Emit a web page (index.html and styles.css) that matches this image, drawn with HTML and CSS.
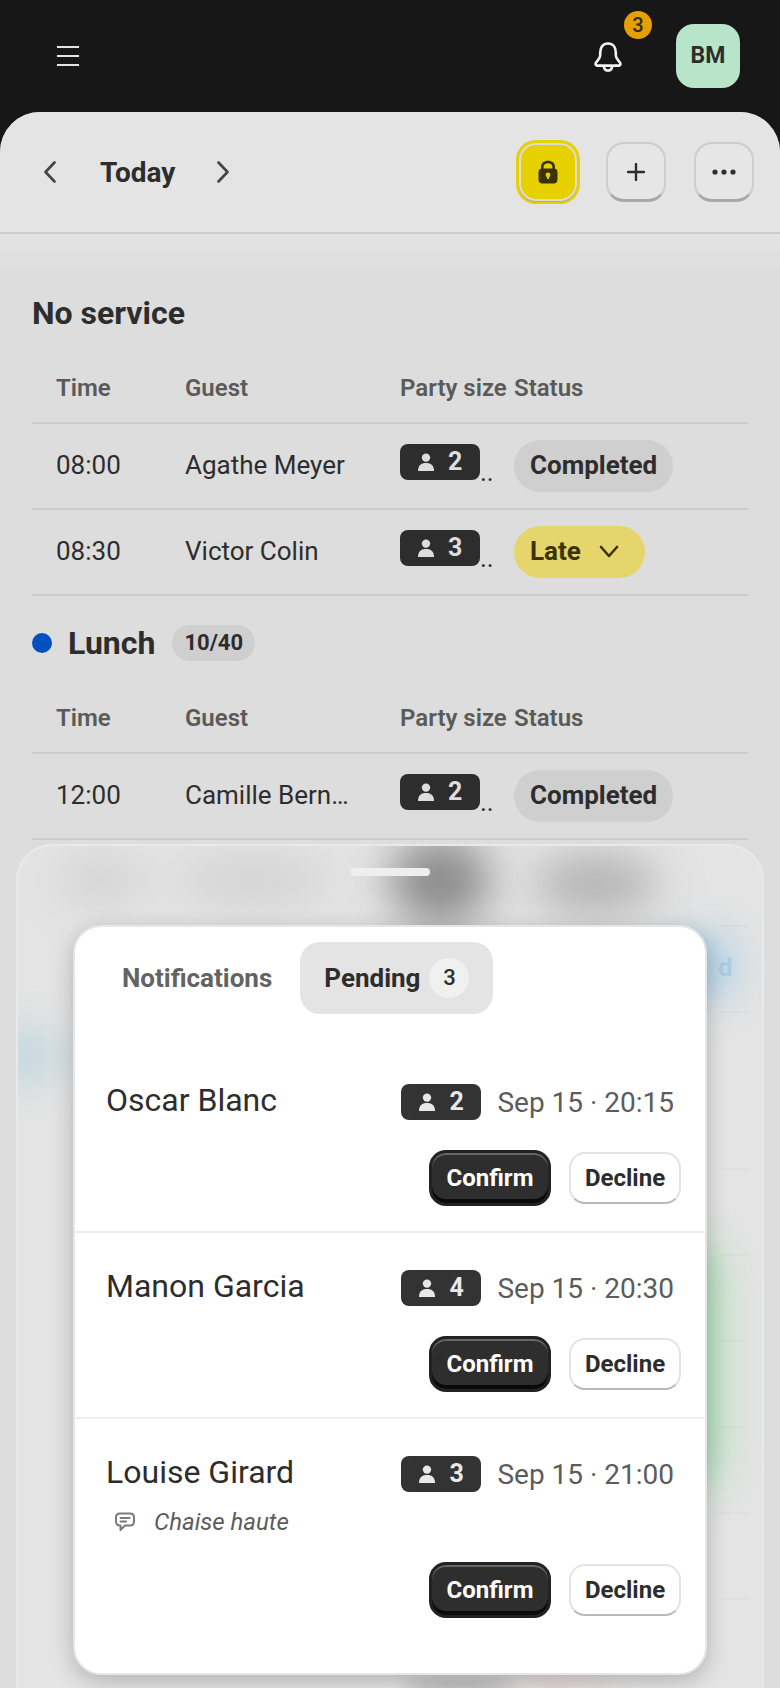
FILE: index.html
```html
<!DOCTYPE html>
<html lang="en">

<head>
	<meta charset="UTF-8">
	<meta name="viewport" content="width=device-width, initial-scale=1.0">
	<title>Today</title>
	<link rel="stylesheet" href="styles.css">
</head>

<body>
	<svg class="icon-defs" width="0" height="0">
		<symbol id="person" viewBox="0 0 16 18">
			<circle cx="8" cy="4.6" r="4.2" />
			<path d="M0 18 C0 12.5 3 10 8 10 C13 10 16 12.5 16 18 Z" />
		</symbol>
	</svg>

	<div class="topbar">
		<button class="menu-btn" aria-label="Menu">
			<span></span><span></span><span></span>
		</button>
		<div class="topbar-right">
			<div class="bell">
				<svg width="28" height="30" viewBox="0 0 28 30" fill="none" stroke="#f2f2f2" stroke-width="2.6" stroke-linejoin="round">
					<path d="M14 1.5 C8.8 1.5 6.2 5.6 6.2 10.5 V13.5 C6.2 16.8 3 18.6 1.8 21 C1.1 22.6 2 23.6 3.8 23.6 H24.2 C26 23.6 26.9 22.6 26.2 21 C25 18.6 21.8 16.8 21.8 13.5 V10.5 C21.8 5.6 19.2 1.5 14 1.5 Z" />
					<path d="M9.8 23.6 C9.8 27 11.6 28.6 14 28.6 C16.4 28.6 18.2 27 18.2 23.6" />
				</svg>
				<span class="bell-badge">3</span>
			</div>
			<div class="avatar">BM</div>
		</div>
	</div>

	<div class="sheet">
		<div class="sheet-header">
			<div class="date-nav">
				<svg width="14" height="22" viewBox="0 0 14 22" fill="none" stroke="#444" stroke-width="2.6" stroke-linecap="round" stroke-linejoin="round"><path d="M11.5 1.5 L2.5 11 L11.5 20.5" /></svg>
				<span class="date-label">Today</span>
				<svg width="14" height="22" viewBox="0 0 14 22" fill="none" stroke="#444" stroke-width="2.6" stroke-linecap="round" stroke-linejoin="round"><path d="M2.5 1.5 L11.5 11 L2.5 20.5" /></svg>
			</div>
			<div class="sheet-actions">
				<button class="btn-lock" aria-label="Lock">
					<svg width="20" height="24" viewBox="0 0 20 24"><path d="M3 9 V7 C3 3 6 .8 10 .8 C14 .8 17 3 17 7 V9 H14.4 V7 C14.4 4.6 12.6 3.2 10 3.2 C7.4 3.2 5.6 4.6 5.6 7 V9 Z" fill="#3a3300" /><rect x="0.5" y="8.5" width="19" height="15" rx="4" fill="#3a3300" /><circle cx="10" cy="15" r="2.4" fill="#e6d000" /><rect x="9" y="15" width="2" height="4" fill="#e6d000" /></svg>
				</button>
				<button class="btn-square" aria-label="Add">
					<svg width="18" height="18" viewBox="0 0 18 18" stroke="#2d2d2d" stroke-width="2.4" stroke-linecap="round"><path d="M9 1 V17 M1 9 H17" /></svg>
				</button>
				<button class="btn-square" aria-label="More">
					<svg width="24" height="6" viewBox="0 0 24 6" fill="#2d2d2d"><circle cx="3" cy="3" r="2.6" /><circle cx="12" cy="3" r="2.6" /><circle cx="21" cy="3" r="2.6" /></svg>
				</button>
			</div>
		</div>

		<div class="services">
			<section class="service">
				<h2 class="service-title">No service</h2>
				<table class="res-table">
					<thead>
						<tr>
							<th class="col-time">Time</th>
							<th class="col-guest">Guest</th>
							<th class="col-party">Party size</th>
							<th class="col-status">Status</th>
						</tr>
					</thead>
					<tbody>
						<tr>
							<td class="col-time">08:00</td>
							<td class="col-guest"><div class="guest-name">Agathe Meyer</div></td>
							<td class="col-party">
								<div class="party-cell"><span class="party-pill"><svg width="16" height="18"><use href="#person" /></svg>2</span><span class="party-more">..</span></div>
							</td>
							<td class="col-status"><span class="status status-done">Completed</span></td>
						</tr>
						<tr>
							<td class="col-time">08:30</td>
							<td class="col-guest"><div class="guest-name">Victor Colin</div></td>
							<td class="col-party">
								<div class="party-cell"><span class="party-pill"><svg width="16" height="18"><use href="#person" /></svg>3</span><span class="party-more">..</span></div>
							</td>
							<td class="col-status">
								<span class="status status-late">Late
									<svg width="20" height="13" viewBox="0 0 20 13" fill="none" stroke="#3a3300" stroke-width="2.6" stroke-linecap="round" stroke-linejoin="round"><path d="M2 2 L10 11 L18 2" /></svg>
								</span>
							</td>
						</tr>
					</tbody>
				</table>
			</section>

			<section class="service service-lunch">
				<h2 class="service-title"><span class="service-dot"></span>Lunch<span class="service-count">10/40</span></h2>
				<table class="res-table">
					<thead>
						<tr>
							<th class="col-time">Time</th>
							<th class="col-guest">Guest</th>
							<th class="col-party">Party size</th>
							<th class="col-status">Status</th>
						</tr>
					</thead>
					<tbody>
						<tr>
							<td class="col-time">12:00</td>
							<td class="col-guest"><div class="guest-name">Camille Bernard</div></td>
							<td class="col-party">
								<div class="party-cell"><span class="party-pill"><svg width="16" height="18"><use href="#person" /></svg>2</span><span class="party-more">..</span></div>
							</td>
							<td class="col-status"><span class="status status-done">Completed</span></td>
						</tr>
					</tbody>
				</table>
			</section>
		</div>
	</div>

	<div class="drawer">
		<!-- what shows through the frosted drawer -->
		<div class="glow glow-dark"></div>
		<div class="glow glow-grey"></div>
		<div class="glow glow-time"></div>
		<div class="glow glow-guest"></div>
		<div class="glow glow-blue"></div>
		<div class="glow glow-blue-left"></div>
		<div class="glow glow-green"></div>
		<div class="glow glow-red"></div>
		<div class="glow glow-under"></div>
		<span class="ghost-d">d</span>
		<div class="ghost-lines">
			<i></i><i></i><i class="gap"></i><i></i><i></i><i></i><i></i><i></i>
		</div>

		<div class="drawer-handle"></div>

		<div class="panel">
			<div class="tabs">
				<div class="tab">Notifications</div>
				<div class="tab tab-active">Pending <span class="tab-count">3</span></div>
			</div>

			<div class="pending-list">
				<div class="pending-item">
					<div class="pending-top">
						<span class="pending-name">Oscar Blanc</span>
						<span class="party-pill"><svg width="16" height="18"><use href="#person" /></svg>2</span>
						<span class="pending-date">Sep 15 · 20:15</span>
					</div>
					<div class="pending-actions">
						<button class="btn-confirm">Confirm</button>
						<button class="btn-decline">Decline</button>
					</div>
				</div>
				<div class="pending-item">
					<div class="pending-top">
						<span class="pending-name">Manon Garcia</span>
						<span class="party-pill"><svg width="16" height="18"><use href="#person" /></svg>4</span>
						<span class="pending-date">Sep 15 · 20:30</span>
					</div>
					<div class="pending-actions">
						<button class="btn-confirm">Confirm</button>
						<button class="btn-decline">Decline</button>
					</div>
				</div>
				<div class="pending-item">
					<div class="pending-top">
						<span class="pending-name">Louise Girard</span>
						<span class="party-pill"><svg width="16" height="18"><use href="#person" /></svg>3</span>
						<span class="pending-date">Sep 15 · 21:00</span>
					</div>
					<div class="pending-note">
						<svg width="22" height="20" viewBox="0 0 22 20" fill="none" stroke="#7a7a7a" stroke-width="2" stroke-linecap="round" stroke-linejoin="round"><path d="M6 1.5 H16 C18.6 1.5 20 3 20 5.5 V9.5 C20 12 18.6 13.5 16 13.5 H11 L6.5 18 V13.5 H6 C3.4 13.5 2 12 2 9.5 V5.5 C2 3 3.4 1.5 6 1.5 Z" /><path d="M6.5 6 H15.5 M6.5 9.5 H12" /></svg>
						<span>Chaise haute</span>
					</div>
					<div class="pending-actions">
						<button class="btn-confirm">Confirm</button>
						<button class="btn-decline">Decline</button>
					</div>
				</div>
			</div>
		</div>
	</div>
</body>

</html>
```
FILE: styles.css
```css
* {
	box-sizing: border-box;
}

html,
body {
	height: 1688px;
}

body {
	margin: 0;
	position: relative;
	overflow: hidden;
	background-color: #171717;
	color: #2d2d2d;
	font-family: Roboto, "Liberation Sans", sans-serif;
}

button {
	font-family: inherit;
	padding: 0;
}

.icon-defs {
	position: absolute;
}

/* Top bar */

.topbar {
	height: 112px;
	display: flex;
	align-items: center;
	justify-content: space-between;
	padding: 0 40px 0 57px;
}

.menu-btn {
	width: 22px;
	height: 20px;
	display: flex;
	flex-direction: column;
	justify-content: space-between;
	background: none;
	border: none;
}

.menu-btn span {
	display: block;
	height: 2px;
	background-color: #e4e4e4;
}

.topbar-right {
	display: flex;
	align-items: center;
	gap: 54px;
}

.bell {
	position: relative;
	width: 28px;
	height: 30px;
	margin-top: 1px;
}

.bell-badge {
	position: absolute;
	left: 30px;
	top: -31px;
	width: 28px;
	height: 28px;
	border-radius: 50%;
	background-color: #e5a000;
	color: #2d2d2d;
	font-size: 20px;
	font-weight: 500;
	line-height: 28px;
	text-align: center;
}

.avatar {
	width: 64px;
	height: 64px;
	border-radius: 18px;
	background-color: #b8e5c9;
	color: #2d2d2d;
	font-size: 23px;
	font-weight: 700;
	line-height: 64px;
	text-align: center;
}

/* Sheet */

.sheet {
	height: 1576px;
	border-radius: 40px 40px 0 0;
	background-color: #dddddd;
	overflow: hidden;
}

.sheet-header {
	height: 122px;
	display: flex;
	align-items: center;
	justify-content: space-between;
	padding: 0 26px 0 43px;
	background-color: #e4e4e4;
	border-bottom: 2px solid #cccccc;
}

.date-nav {
	display: flex;
	align-items: center;
	gap: 43px;
}

.date-nav .date-label {
	font-size: 28px;
	font-weight: 700;
	margin-right: -2px;
}

.sheet-actions {
	display: flex;
	align-items: center;
	gap: 28px;
}

.btn-lock {
	width: 54px;
	height: 54px;
	margin-right: 3px;
	display: flex;
	align-items: center;
	justify-content: center;
	border: none;
	border-radius: 15px;
	background-color: #e6d000;
	box-shadow: 0 0 0 2px #dcdcdc, 0 1px 0 2px #a8a8a8, 0 0 0 5px #e6d000;
}

.btn-square {
	width: 60px;
	height: 60px;
	display: flex;
	align-items: center;
	justify-content: center;
	border: 2px solid #cdcdcd;
	border-bottom: 3px solid #a8a8a8;
	border-radius: 18px;
	background-color: #e6e6e6;
}

/* Services */

.services {
	padding: 61px 32px 0;
	background: linear-gradient(#e3e3e3, #dddddd 50px) no-repeat;
}

.service-lunch {
	margin-top: 29px;
}

.service-title {
	margin: 0;
	height: 36px;
	display: flex;
	align-items: center;
	font-size: 32px;
	font-weight: 700;
	line-height: 36px;
}

.service-dot {
	width: 20px;
	height: 20px;
	margin-right: 16px;
	border-radius: 50%;
	background-color: #0050c0;
}

.service-count {
	height: 36px;
	margin-left: 17px;
	padding: 0 12px;
	border-radius: 18px;
	background-color: #cfcfcf;
	font-size: 22px;
	line-height: 36px;
}

/* Reservation table */

.res-table {
	width: 716px;
	margin-top: 44px;
	border-collapse: separate;
	border-spacing: 0;
	table-layout: fixed;
}

.res-table th {
	height: 47px;
	padding: 0 0 21px;
	border-bottom: 2px solid #cccccc;
	color: #5a5a5a;
	font-size: 24px;
	font-weight: 600;
	line-height: 26px;
	text-align: left;
	vertical-align: bottom;
	white-space: nowrap;
}

.res-table td {
	height: 86px;
	padding: 0 0 2px;
	border-bottom: 2px solid #cccccc;
	font-size: 26px;
}

.res-table .col-time {
	width: 153px;
	padding-left: 24px;
}

.res-table .col-guest {
	width: 215px;
}

.res-table .col-party {
	width: 114px;
}

.res-table td.col-party,
.res-table td.col-status {
	padding-bottom: 0;
}

.guest-name {
	width: 166px;
	overflow: hidden;
	text-overflow: ellipsis;
	white-space: nowrap;
}

.party-cell {
	height: 44px;
	display: flex;
}

.party-more {
	align-self: flex-end;
	margin-bottom: 3px;
	font-size: 26px;
	line-height: 26px;
}

.party-pill {
	width: 80px;
	height: 36px;
	flex: none;
	display: inline-flex;
	align-items: center;
	gap: 14px;
	padding: 0 0 0 18px;
	border-radius: 8px;
	background-color: #2d2d2d;
	color: #dddddd;
	fill: #dddddd;
	font-size: 25px;
	font-weight: 700;
	line-height: 36px;
}

.status {
	height: 52px;
	display: inline-flex;
	align-items: center;
	gap: 18px;
	padding: 0 16px 2px;
	border-radius: 26px;
	font-size: 26px;
	font-weight: 700;
	vertical-align: middle;
}

.status-done {
	background-color: #cfcfcf;
}

.status-late {
	padding-right: 26px;
	background-color: #e5d56b;
	color: #3a3300;
}

/* Frosted drawer */

.drawer {
	position: absolute;
	left: 16px;
	right: 16px;
	top: 844px;
	bottom: 0;
	overflow: hidden;
	border: 2px solid #e9e9e9;
	border-bottom: none;
	border-radius: 36px 36px 0 0;
	background-color: #e4e4e4;
}

.glow {
	position: absolute;
	border-radius: 50%;
	filter: blur(22px);
}

.glow-dark {
	left: 372px;
	top: -10px;
	width: 100px;
	height: 90px;
	background-color: #8c8c8c;
}

.glow-grey {
	left: 515px;
	top: 8px;
	width: 125px;
	height: 60px;
	background-color: #b2b2b2;
}

.glow-time {
	left: 40px;
	top: 14px;
	width: 85px;
	height: 40px;
	background-color: #cfcfcf;
}

.glow-guest {
	left: 160px;
	top: 14px;
	width: 150px;
	height: 40px;
	background-color: #cfcfcf;
}

.glow-blue {
	left: 655px;
	top: 90px;
	width: 60px;
	height: 60px;
	background-color: #9fcbe8;
}

.glow-blue-left {
	left: -30px;
	top: 190px;
	width: 76px;
	height: 40px;
	background-color: #b4d2de;
}

.glow-green {
	left: 655px;
	top: 400px;
	width: 42px;
	height: 240px;
	border-radius: 20px;
	background-color: #96dca6;
}

.glow-red {
	left: 480px;
	top: 835px;
	width: 120px;
	height: 20px;
	background-color: #e6d2d2;
	filter: blur(12px);
}

.glow-under {
	left: 385px;
	top: 834px;
	width: 110px;
	height: 12px;
	background-color: #a8a8a8;
	filter: blur(8px);
}

.ghost-d {
	position: absolute;
	left: 700px;
	top: 106px;
	color: #a9cde3;
	font-size: 26px;
	font-weight: 700;
	line-height: 30px;
}

.ghost-lines {
	position: absolute;
	left: 702px;
	top: 79px;
	width: 28px;
}

.ghost-lines i {
	display: block;
	height: 2px;
	margin-bottom: 84px;
	background-color: rgba(0, 0, 0, 0.02);
}

.ghost-lines i.gap {
	margin-top: 155px;
}

.drawer-handle {
	position: relative;
	width: 80px;
	height: 8px;
	margin: 22px auto 0;
	border-radius: 4px;
	background-color: #eeeeee;
}

/* Pending panel */

.panel {
	position: relative;
	width: 634px;
	height: 750px;
	margin: 49px auto 0;
	padding: 15px 0 0;
	border: 2px solid #e6e6e6;
	border-radius: 28px;
	background-color: #fff;
	box-shadow: 0 6px 22px rgba(0, 0, 0, 0.22);
}

.tabs {
	display: flex;
	gap: 5px;
	padding-left: 24px;
}

.tab {
	height: 72px;
	display: flex;
	align-items: center;
	padding: 0 23px;
	border-radius: 20px;
	color: #636363;
	font-size: 26px;
	font-weight: 700;
}

.tab-active {
	padding: 0 24px;
	gap: 9px;
	background-color: #e4e4e4;
	color: #2d2d2d;
}

.tab-count {
	width: 40px;
	height: 40px;
	border-radius: 50%;
	background-color: #f0f0f0;
	font-size: 22px;
	font-weight: 500;
	line-height: 40px;
	text-align: center;
}

.pending-list {
	margin-top: 33px;
}

.pending-item {
	padding: 37px 24px 25px 31px;
	border-bottom: 2px solid #eeeeee;
}

.pending-item:last-child {
	border-bottom: none;
}

.pending-top {
	height: 36px;
	display: flex;
	align-items: center;
}

.pending-name {
	flex: 1;
	font-size: 32px;
	margin-top: -4px;
}

.pending-top .party-pill {
	background-color: #333333;
	color: #e8e8e8;
	fill: #e8e8e8;
}

.pending-date {
	margin: 0 7px 0 16px;
	color: #5c5c5c;
	font-size: 28px;
}

.pending-note {
	height: 28px;
	margin-top: 16px;
	display: flex;
	align-items: center;
	gap: 18px;
	padding-left: 8px;
	color: #5c5c5c;
	font-size: 24px;
	font-style: italic;
}

.pending-note + .pending-actions {
	margin-top: 26px;
}

.pending-actions {
	height: 56px;
	margin-top: 30px;
	display: flex;
	align-items: center;
	justify-content: flex-end;
	gap: 18px;
}

.btn-confirm {
	width: 122px;
	height: 56px;
	border: 3px solid #222222;
	border-radius: 17px;
	background-color: #2e2e2e;
	box-shadow: inset 0 2px 0 #666666, inset 0 -4px 0 #0a0a0a;
	color: #fff;
	font-size: 24px;
	font-weight: 700;
}

.btn-decline {
	width: 112px;
	height: 52px;
	border: 2px solid #e3e3e3;
	border-bottom: 2px solid #b8b8b8;
	border-radius: 16px;
	background-color: #fff;
	color: #2d2d2d;
	font-size: 24px;
	font-weight: 700;
}
```
